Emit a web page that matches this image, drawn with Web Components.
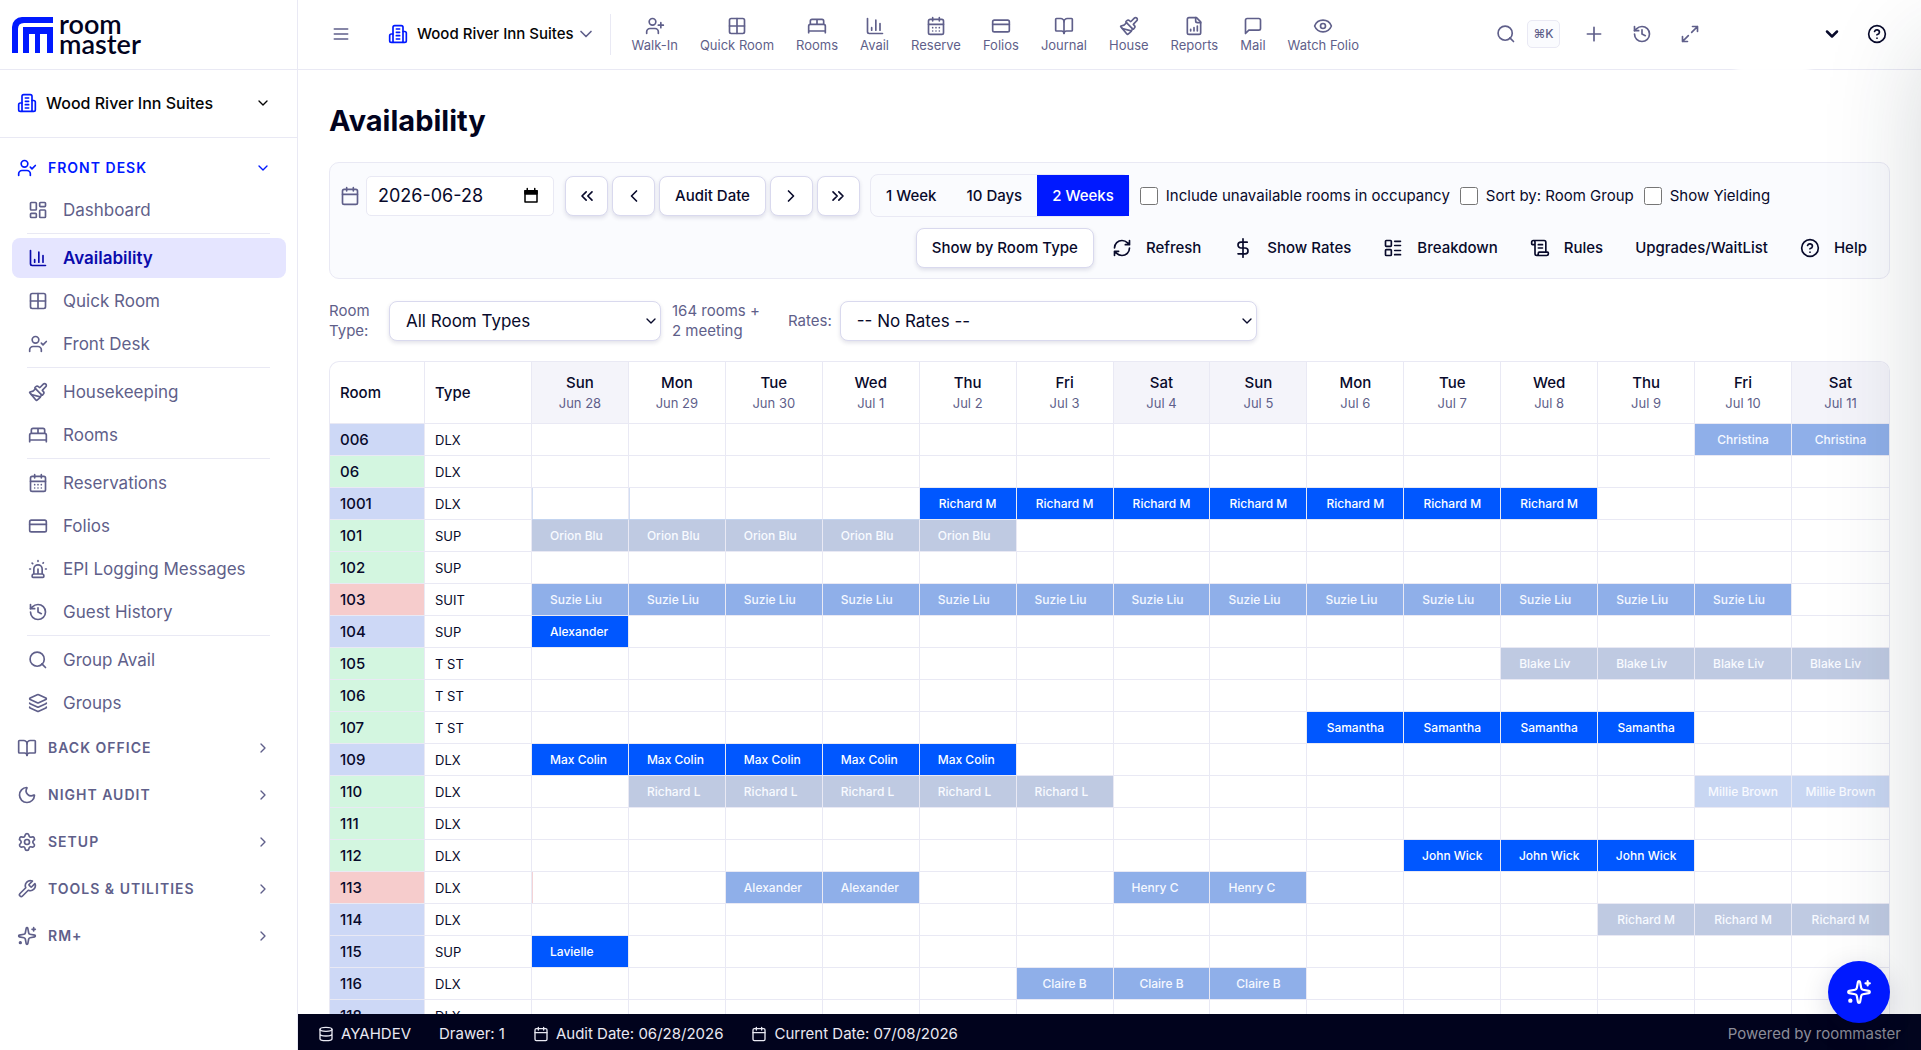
<!DOCTYPE html>
<html lang="en">
<head>
<meta charset="utf-8">
<meta name="viewport" content="width=device-width, initial-scale=1">
<title>Availability</title>
<style>
  :root {
    --ink: #080a2b;
    --muted: #5f5f8a;
    --brand: #0019ff;
    --line: #e9e9f4;
    --soft: #fafbfe;
  }
  html, body { height: 100%; }
  body { margin: 0; background: #fff; color: var(--ink); font: 15px/20px Inter, "Open Sans", "Liberation Sans", sans-serif; }
</style>
</head>
<body>
<rm-app></rm-app>

<script>
const ICONS = {
  menu: '<path d="M4 6h16M4 12h16M4 18h16"/>',
  building: '<path d="M6 22V4a2 2 0 0 1 2-2h8a2 2 0 0 1 2 2v18Z"/><path d="M6 12H4a2 2 0 0 0-2 2v6a2 2 0 0 0 2 2h2M18 9h2a2 2 0 0 1 2 2v9a2 2 0 0 1-2 2h-2M10 6h4M10 10h4M10 14h4M10 18h4"/>',
  userCheck: '<path d="m16 11 2 2 4-4M16 21v-2a4 4 0 0 0-4-4H6a4 4 0 0 0-4 4v2"/><circle cx="9" cy="7" r="4"/>',
  userPlus: '<path d="M16 21v-2a4 4 0 0 0-4-4H6a4 4 0 0 0-4 4v2M19 8v6M22 11h-6"/><circle cx="9" cy="7" r="4"/>',
  dashboard: '<rect width="7" height="9" x="3" y="3" rx="1"/><rect width="7" height="5" x="14" y="3" rx="1"/><rect width="7" height="9" x="14" y="12" rx="1"/><rect width="7" height="5" x="3" y="16" rx="1"/>',
  chart: '<path d="M3 3v16a2 2 0 0 0 2 2h16M18 17V9M13 17V5M8 17v-3"/>',
  grid: '<path d="M12 3v18M3 12h18"/><rect x="3" y="3" width="18" height="18" rx="2"/>',
  brush: '<path d="m14.622 17.897-10.68-2.913"/><path d="M18.376 2.622a1 1 0 1 1 3.002 3.002L17.36 9.643a.5.5 0 0 0 0 .707l.944.944a2.41 2.41 0 0 1 0 3.408l-.944.944a.5.5 0 0 1-.707 0L8.354 7.348a.5.5 0 0 1 0-.707l.944-.944a2.41 2.41 0 0 1 3.408 0l.944.944a.5.5 0 0 0 .707 0z"/><path d="M9 8c-1.804 2.71-3.97 3.46-6.583 3.948a.507.507 0 0 0-.302.819l7.32 8.883a1 1 0 0 0 1.185.204C12.735 20.405 16 16.792 16 15"/>',
  bed: '<path d="M2 20v-8a2 2 0 0 1 2-2h16a2 2 0 0 1 2 2v8M4 10V6a2 2 0 0 1 2-2h12a2 2 0 0 1 2 2v4M12 4v6M2 18h20"/>',
  calendarDays: '<path d="M8 2v4M16 2v4M3 10h18M8 14h.01M12 14h.01M16 14h.01M8 18h.01M12 18h.01M16 18h.01"/><rect width="18" height="18" x="3" y="4" rx="2"/>',
  calendar: '<path d="M8 2v4M16 2v4M3 10h18"/><rect width="18" height="18" x="3" y="4" rx="2"/>',
  card: '<rect width="20" height="14" x="2" y="5" rx="2"/><path d="M2 10h20"/>',
  siren: '<path d="M7 18v-6a5 5 0 1 1 10 0v6M5 21a1 1 0 0 0 1 1h12a1 1 0 0 0 1-1v-1a2 2 0 0 0-2-2H7a2 2 0 0 0-2 2zM21 12h1M18.5 4.5 18 5M2 12h1M12 2v1M4.929 4.929l.707.707M12 12v6"/>',
  history: '<path d="M3 12a9 9 0 1 0 9-9 9.75 9.75 0 0 0-6.74 2.74L3 8"/><path d="M3 3v5h5M12 7v5l4 2"/>',
  search: '<path d="m21 21-4.34-4.34"/><circle cx="11" cy="11" r="8.5"/>',
  layers: '<path d="M12.83 2.18a2 2 0 0 0-1.66 0L2.6 6.08a1 1 0 0 0 0 1.83l8.58 3.91a2 2 0 0 0 1.66 0l8.58-3.9a1 1 0 0 0 0-1.83z"/><path d="M2 12a1 1 0 0 0 .58.91l8.6 3.91a2 2 0 0 0 1.65 0l8.58-3.9A1 1 0 0 0 22 12"/><path d="M2 17a1 1 0 0 0 .58.91l8.6 3.91a2 2 0 0 0 1.65 0l8.58-3.9A1 1 0 0 0 22 17"/>',
  book: '<path d="M12 7v14"/><path d="M3 18a1 1 0 0 1-1-1V4a1 1 0 0 1 1-1h5a4 4 0 0 1 4 4 4 4 0 0 1 4-4h5a1 1 0 0 1 1 1v13a1 1 0 0 1-1 1h-6a3 3 0 0 0-3 3 3 3 0 0 0-3-3z"/>',
  moon: '<path d="M20.985 12.486a9 9 0 1 1-9.473-9.472c.405-.022.617.46.402.803a6 6 0 0 0 8.268 8.268c.344-.215.825-.004.803.401"/>',
  settings: '<path d="M9.671 4.136a2.34 2.34 0 0 1 4.659 0 2.34 2.34 0 0 0 3.319 1.915 2.34 2.34 0 0 1 2.33 4.033 2.34 2.34 0 0 0 0 3.831 2.34 2.34 0 0 1-2.33 4.033 2.34 2.34 0 0 0-3.319 1.915 2.34 2.34 0 0 1-4.659 0 2.34 2.34 0 0 0-3.32-1.915 2.34 2.34 0 0 1-2.33-4.033 2.34 2.34 0 0 0 0-3.831A2.34 2.34 0 0 1 6.35 6.051a2.34 2.34 0 0 0 3.319-1.915"/><circle cx="12" cy="12" r="3"/>',
  wrench: '<path d="M14.7 6.3a1 1 0 0 0 0 1.4l1.6 1.6a1 1 0 0 0 1.4 0l3.77-3.77a6 6 0 0 1-7.94 7.94l-6.91 6.91a2.12 2.12 0 0 1-3-3l6.91-6.91a6 6 0 0 1 7.94-7.94l-3.76 3.76z"/>',
  sparkles: '<path d="M11.017 2.814a1 1 0 0 1 1.966 0l1.051 5.558a2 2 0 0 0 1.594 1.594l5.558 1.051a1 1 0 0 1 0 1.966l-5.558 1.051a2 2 0 0 0-1.594 1.594l-1.051 5.558a1 1 0 0 1-1.966 0l-1.051-5.558a2 2 0 0 0-1.594-1.594l-5.558-1.051a1 1 0 0 1 0-1.966l5.558-1.051a2 2 0 0 0 1.594-1.594zM20 2v4M22 4h-4"/><circle cx="4" cy="20" r="1" fill="currentColor"/>',
  plus: '<path d="M4 12h16M12 4v16"/>',
  expand: '<path d="M15 3h6v6M21 3l-7 7M3 21l7-7M9 21H3v-6"/>',
  help: '<circle cx="12" cy="12" r="10"/><path d="M9.09 9a3 3 0 0 1 5.83 1c0 2-3 3-3 3M12 17h.01"/>',
  report: '<path d="M15 2H6a2 2 0 0 0-2 2v16a2 2 0 0 0 2 2h12a2 2 0 0 0 2-2V7Z"/><path d="M14 2v4a2 2 0 0 0 2 2h4M8 18v-2M12 18v-4M16 18v-6"/>',
  message: '<path d="M21 15a2 2 0 0 1-2 2H7l-4 4V5a2 2 0 0 1 2-2h14a2 2 0 0 1 2 2z"/>',
  eye: '<path d="M2.062 12.348a1 1 0 0 1 0-.696 10.75 10.75 0 0 1 19.876 0 1 1 0 0 1 0 .696 10.75 10.75 0 0 1-19.876 0"/><circle cx="12" cy="12" r="3"/>',
  refresh: '<path d="M3 12a9 9 0 0 1 9-9 9.75 9.75 0 0 1 6.74 2.74L21 8M21 3v5h-5M21 12a9 9 0 0 1-9 9 9.75 9.75 0 0 1-6.74-2.74L3 16M8 16H3v5"/>',
  dollar: '<path d="M12 1v22M17 5H9.5a3.5 3.5 0 0 0 0 7h5a3.5 3.5 0 0 1 0 7H6"/>',
  list: '<rect width="7" height="7" x="3" y="3" rx="1"/><rect width="7" height="7" x="3" y="14" rx="1"/><path d="M14 4h7M14 9h7M14 15h7M14 20h7"/>',
  scroll: '<path d="M15 12h-5M15 8h-5M19 17V5a2 2 0 0 0-2-2H4M8 21h12a2 2 0 0 0 2-2v-1a1 1 0 0 0-1-1H11a1 1 0 0 0-1 1v1a2 2 0 1 1-4 0V5a2 2 0 1 0-4 0v2a1 1 0 0 0 1 1h3"/>',
  database: '<ellipse cx="12" cy="5" rx="9" ry="3"/><path d="M3 5v14a9 3 0 0 0 18 0V5M3 12a9 3 0 0 0 18 0"/>',
  down: '<path d="m6 9 6 6 6-6"/>',
  right: '<path d="m9 18 6-6-6-6"/>',
  left: '<path d="m15 18-6-6 6-6"/>',
  first: '<path d="m11 17-5-5 5-5M18 17l-5-5 5-5"/>',
  last: '<path d="m6 17 5-5-5-5M13 17l5-5-5-5"/>',
  datePicker: '<path d="M4 5h16v15H4zM4 5h16v4H4z"/><path d="M4 5h16v4H4z" fill="currentColor"/><path d="M7 2v3M17 2v3"/>'
};

/* Base class: puts a style sheet and markup in an open shadow root. */
class RmElement extends HTMLElement {
  connectedCallback() {
    if (this.shadowRoot) return;
    const root = this.attachShadow({ mode: 'open' });
    const tpl = document.createElement('template');
    tpl.innerHTML = `<style>*{box-sizing:border-box}button,input,select{font:inherit;color:inherit}button{background:none;border:0;padding:0;cursor:pointer}a{color:inherit;text-decoration:none}${this.css()}</style>${this.html()}`;
    root.append(tpl.content.cloneNode(true));
  }
  css() { return ':host{display:block}'; }
  html() { return '<slot></slot>'; }
  attr(name, fallback = '') { return this.getAttribute(name) ?? fallback; }
}

customElements.define('rm-icon', class extends RmElement {
  css() { return `:host{display:inline-flex;flex:none} svg{display:block}`; }
  html() {
    const s = this.attr('size', '20');
    return `<svg width="${s}" height="${s}" viewBox="0 0 24 24" fill="none" stroke="currentColor" stroke-width="${this.attr('weight', '2')}" stroke-linecap="round" stroke-linejoin="round" aria-hidden="true">${ICONS[this.attr('name')]}</svg>`;
  }
});

customElements.define('rm-logo', class extends RmElement {
  css() { return `
    :host{display:block;height:70px;border-bottom:1px solid var(--line);padding:14px 12px}
    a{display:flex;gap:6px;align-items:center}
    svg{display:block}
    .word{font:600 27px/20px Lato,"Open Sans",sans-serif;display:grid;color:#02031e}`; }
  html() { return `<a href="#home" aria-label="roommaster">
      <svg width="41" height="37" viewBox="0 0 41 37"><g fill="#0019ff"><path d="M0 37V11A10 10 0 0 1 10 1H41V7H12Q6 7 6 13V37Z"/><path d="M11 37V11H41V37H35V18H28V37H23V18H17V37Z"/></g></svg>
      <span class="word"><span>room</span><span>master</span></span></a>`; }
});

customElements.define('rm-nav-item', class extends RmElement {
  css() { return `
    :host{display:block;padding:0 11px 0 12px}
    a{display:flex;align-items:center;gap:15px;height:40px;padding:0 16px;border-radius:8px;font-size:17px;color:var(--muted)}
    a[aria-current]{background:#e5e5ff;color:#0a0aac;font-weight:600}`; }
  html() { return `<a href="#" ${this.hasAttribute('active') ? 'aria-current="page"' : ''}><rm-icon name="${this.attr('icon')}"></rm-icon><slot></slot></a>`; }
});

customElements.define('rm-nav-group', class extends RmElement {
  css() { return `
    :host{display:block;color:var(--muted)}
    :host([open]){color:var(--brand)}
    button{display:flex;align-items:center;gap:11px;width:100%;height:44px;padding:0 26px 0 17px;font-size:14px;font-weight:600;letter-spacing:1px;text-align:left}
    .t{flex:1}
    .items{display:flex;flex-direction:column;gap:3px}`; }
  html() { const o = this.hasAttribute('open'); return `<button type="button" aria-expanded="${o}"><rm-icon name="${this.attr('icon')}"></rm-icon><span class="t">${this.attr('label').replace('&', '&amp;')}</span><rm-icon name="${o ? 'down' : 'right'}" size="16"></rm-icon></button><div class="items"><slot></slot></div>`; }
});

customElements.define('rm-sidebar', class extends RmElement {
  css() { return `
    :host{display:flex;flex-direction:column;border-right:1px solid var(--line);background:#fff;overflow:hidden}
    .prop{display:flex;align-items:center;gap:9px;height:68px;padding:0 26px 2px 17px;border-bottom:1px solid var(--line);font-size:16px;font-weight:500;color:#050505;text-align:left}
    .prop span{flex:1}
    .blue{color:var(--brand)}
    nav{display:flex;flex-direction:column;gap:3px;padding-top:8px}
    hr{border:0;height:1px;background:var(--line);margin:0 27px 1px;align-self:stretch}`; }
  html() {
    const item = (i, t, a = '') => `<rm-nav-item icon="${i}" ${a}>${t}</rm-nav-item>`;
    return `<rm-logo></rm-logo>
    <button type="button" class="prop"><rm-icon class="blue" name="building"></rm-icon><span>Wood River Inn Suites</span><rm-icon name="down" size="16"></rm-icon></button>
    <nav aria-label="Main">
      <rm-nav-group open icon="userCheck" label="FRONT DESK">
        ${item('dashboard', 'Dashboard')}<hr>
        ${item('chart', 'Availability', 'active')}${item('grid', 'Quick Room')}${item('userCheck', 'Front Desk')}<hr>
        ${item('brush', 'Housekeeping')}${item('bed', 'Rooms')}<hr>
        ${item('calendarDays', 'Reservations')}${item('card', 'Folios')}${item('siren', 'EPI Logging Messages')}${item('history', 'Guest History')}<hr>
        ${item('search', 'Group Avail')}${item('layers', 'Groups')}
      </rm-nav-group>
      <rm-nav-group icon="book" label="BACK OFFICE"></rm-nav-group>
      <rm-nav-group icon="moon" label="NIGHT AUDIT"></rm-nav-group>
      <rm-nav-group icon="settings" label="SETUP"></rm-nav-group>
      <rm-nav-group icon="wrench" label="TOOLS & UTILITIES"></rm-nav-group>
      <rm-nav-group icon="sparkles" label="RM+"></rm-nav-group>
    </nav>`;
  }
});

customElements.define('rm-quick-link', class extends RmElement {
  css() { return `
    :host{display:block}
    a{display:flex;flex-direction:column;align-items:center;gap:1px;font-size:13px;line-height:16px;white-space:nowrap;color:var(--muted)}`; }
  html() { return `<a href="#"><rm-icon name="${this.attr('icon')}"></rm-icon><slot></slot></a>`; }
});

customElements.define('rm-topbar', class extends RmElement {
  css() { return `
    :host{display:flex;align-items:center;height:70px;padding:0 34px 1px 33px;border-bottom:1px solid var(--line);background:#fff;color:var(--muted)}
    .prop{display:flex;align-items:center;gap:9px;margin-left:37px;font-weight:500;color:#050505;white-space:nowrap}
    .prop .c{color:var(--muted);margin-left:-7px}
    .blue{color:var(--brand)}
    .rule{width:1px;height:41px;background:var(--line);margin:0 21px 0 14px}
    nav{display:flex;gap:22px}
    .tools{display:flex;align-items:center;margin-left:auto}
    button{display:flex}
    .find{align-items:center;gap:11px}
    kbd{display:grid;place-items:center;width:33px;height:28px;border:1px solid var(--line);border-radius:5px;background:var(--soft);font:500 12px/16px Inter,"DejaVu Sans",sans-serif}
    .g{margin-left:24px}.h{margin-left:28px}
    .user{align-items:center;position:relative;margin-left:28px;width:114px;justify-content:flex-end;color:var(--ink)}
    .veil{position:absolute;left:8px;top:-18px;width:74px;height:68px;background:#fff;filter:blur(3px)}
    .last{margin-left:25px;color:var(--ink)}`; }
  html() {
    const q = (i, t) => `<rm-quick-link icon="${i}">${t}</rm-quick-link>`;
    return `<button type="button" aria-label="Toggle menu"><rm-icon name="menu"></rm-icon></button>
    <button type="button" class="prop"><rm-icon class="blue" name="building"></rm-icon><span>Wood River Inn Suites</span><rm-icon class="c" name="down"></rm-icon></button>
    <span class="rule"></span>
    <nav aria-label="Shortcuts">${q('userPlus', 'Walk-In')}${q('grid', 'Quick Room')}${q('bed', 'Rooms')}${q('chart', 'Avail')}${q('calendarDays', 'Reserve')}${q('card', 'Folios')}${q('book', 'Journal')}${q('brush', 'House')}${q('report', 'Reports')}${q('message', 'Mail')}${q('eye', 'Watch Folio')}</nav>
    <div class="tools">
      <button type="button" class="find" aria-label="Search"><rm-icon name="search"></rm-icon><kbd>⌘K</kbd></button>
      <button type="button" class="g" aria-label="Add"><rm-icon name="plus"></rm-icon></button>
      <button type="button" class="h" aria-label="History"><rm-icon name="history"></rm-icon></button>
      <button type="button" class="h" aria-label="Full screen"><rm-icon name="expand"></rm-icon></button>
      <button type="button" class="user" aria-label="Account"><span class="veil"></span><rm-icon name="down" weight="3"></rm-icon></button>
      <button type="button" class="last" aria-label="Help"><rm-icon name="help"></rm-icon></button>
    </div>`;
  }
});

customElements.define('rm-button', class extends RmElement {
  css() { return `
    :host{display:block}
    button{display:flex;align-items:center;justify-content:center;gap:14px;height:40px;padding:0 14px;border-radius:8px;font-size:15px;font-weight:500;white-space:nowrap}
    :host([raised]) button{padding:0 15px;background:#fff;border:1px solid #d9d9ee;box-shadow:0 2px 4px rgba(20,20,70,.12)}
    :host([raised][square]) button{width:43px;padding:0}`; }
  html() {
    const i = this.attr('icon'), l = this.attr('label');
    return `<button type="button" ${l ? `aria-label="${l}"` : ''}>${i ? `<rm-icon name="${i}"></rm-icon>` : ''}<slot></slot></button>`;
  }
});

customElements.define('rm-toolbar', class extends RmElement {
  css() { return `
    :host{display:flex;flex-direction:column;gap:11px;padding:11px 8px 10px 10px;background:var(--soft);border:1px solid var(--line);border-radius:10px}
    .row{display:flex;align-items:center}
    .end{justify-content:flex-end;gap:4px}
    .date{display:flex;align-items:center;gap:6px;color:var(--muted)}
    .date label{display:flex}
    .field{display:flex;align-items:center;width:188px;height:40px;padding:0 13px 0 11px;background:#fff;border:1px solid var(--line);border-radius:5px;color:var(--ink)}
    .field input{flex:1;min-width:0;border:0;background:none;padding:0;font-size:18px;outline:0}
    .field button{color:#000;display:flex}
    .steps{display:flex;gap:4px;margin-left:11px}
    .seg{display:flex;margin-left:10px;height:43px;border:1px solid var(--line);border-radius:8px}
    .seg button{padding:0 15px;font-weight:500}
    .seg button[aria-pressed=true]{background:var(--brand);color:#fff}
    .check{display:flex;align-items:center;gap:8px;margin-left:10px;white-space:nowrap}
    .check input{width:18px;height:18px;margin:0}`; }
  html() { return `
    <div class="row">
      <div class="date"><label for="d" aria-label="Date"><rm-icon name="calendar"></rm-icon></label>
        <span class="field"><input id="d" type="text" value="2026-06-28" inputmode="numeric"><button type="button" aria-label="Open calendar"><rm-icon name="datePicker" size="18"></rm-icon></button></span></div>
      <div class="steps">
        <rm-button raised square icon="first" label="Back two weeks"></rm-button><rm-button raised square icon="left" label="Back one day"></rm-button><rm-button raised>Audit Date</rm-button><rm-button raised square icon="right" label="Forward one day"></rm-button><rm-button raised square icon="last" label="Forward two weeks"></rm-button>
      </div>
      <div class="seg" role="group" aria-label="Range"><button type="button" aria-pressed="false">1 Week</button><button type="button" aria-pressed="false">10 Days</button><button type="button" aria-pressed="true">2 Weeks</button></div>
      <label class="check"><input type="checkbox">Include unavailable rooms in occupancy</label>
      <label class="check"><input type="checkbox">Sort by: Room Group</label>
      <label class="check"><input type="checkbox">Show Yielding</label>
    </div>
    <div class="row end">
      <rm-button raised>Show by Room Type</rm-button>
      <rm-button icon="refresh">Refresh</rm-button>
      <rm-button icon="dollar">Show Rates</rm-button>
      <rm-button icon="list">Breakdown</rm-button>
      <rm-button icon="scroll">Rules</rm-button>
      <rm-button>Upgrades/WaitList</rm-button>
      <rm-button icon="help">Help</rm-button>
    </div>`; }
});

customElements.define('rm-filters', class extends RmElement {
  css() { return `
    :host{display:flex;align-items:center;height:40px;color:var(--muted)}
    .room{width:60px}
    .pick{display:grid;align-items:center;width:272px;color:var(--ink)}
    .pick.wide{width:417px;margin-left:8px}
    .pick > *{grid-area:1/1}
    .pick rm-icon{justify-self:end;margin-right:2px;pointer-events:none}
    select{appearance:none;width:100%;height:40px;padding:0 24px 0 16px;font-size:17px;background:#fff;border:1px solid #d9d9ee;border-radius:8px;box-shadow:0 2px 4px rgba(20,20,70,.12);outline:0}
    .count{width:105px;margin:0 11px}`; }
  html() { return `
    <label class="room" for="type">Room<br>Type:</label>
    <span class="pick"><select id="type"><option>All Room Types</option></select><rm-icon name="down" size="16"></rm-icon></span>
    <span class="count">164 rooms +<br>2 meeting</span>
    <label for="rate">Rates:</label>
    <span class="pick wide"><select id="rate"><option>-- No Rates --</option></select><rm-icon name="down" size="16"></rm-icon></span>`; }
});

const DAYS = ['Sun Jun 28', 'Mon Jun 29', 'Tue Jun 30', 'Wed Jul 1', 'Thu Jul 2', 'Fri Jul 3', 'Sat Jul 4', 'Sun Jul 5', 'Mon Jul 6', 'Tue Jul 7', 'Wed Jul 8', 'Thu Jul 9', 'Fri Jul 10', 'Sat Jul 11'];
/* room, type, status, stays as [first day, nights, guest, tone, text at start] */
const ROOMS = [
  ['006', 'DLX', 'b', [[12, 2, 'Christina', 'sky']]],
  ['06', 'DLX', 'g', []],
  ['1001', 'DLX', 'b', [[4, 7, 'Richard M', 'vivid']], 'outline'],
  ['101', 'SUP', 'g', [[0, 5, 'Orion Blu', 'slate', 1]]],
  ['102', 'SUP', 'g', []],
  ['103', 'SUIT', 'r', [[0, 13, 'Suzie Liu', 'sky', 1]]],
  ['104', 'SUP', 'b', [[0, 1, 'Alexander', 'vivid', 1]]],
  ['105', 'T ST', 'g', [[10, 4, 'Blake Liv', 'slate', 1]]],
  ['106', 'T ST', 'g', []],
  ['107', 'T ST', 'g', [[8, 4, 'Samantha', 'vivid']]],
  ['109', 'DLX', 'b', [[0, 5, 'Max Colin', 'vivid', 1]]],
  ['110', 'DLX', 'g', [[1, 5, 'Richard L', 'slate', 1], [12, 2, 'Millie Brown', 'pale']]],
  ['111', 'DLX', 'g', []],
  ['112', 'DLX', 'g', [[9, 3, 'John Wick', 'vivid']]],
  ['113', 'DLX', 'r', [[2, 2, 'Alexander', 'sky', 1], [6, 2, 'Henry C', 'sky', 1]], 'blush'],
  ['114', 'DLX', 'b', [[11, 3, 'Richard M', 'slate']]],
  ['115', 'SUP', 'b', [[0, 1, 'Lavielle', 'vivid', 1]]],
  ['116', 'DLX', 'b', [[5, 3, 'Claire B', 'sky']]],
  ['118', 'DLX', 'b', []]
];

customElements.define('rm-availability-grid', class extends RmElement {
  css() { return `
    :host{display:block;overflow:hidden;border:1px solid var(--line);border-bottom:0;border-radius:10px 10px 0 0}
    table{width:100%;table-layout:fixed;border-collapse:separate;border-spacing:0}
    .r{width:95px}.t{width:107px}
    th,td{padding:0;border-right:1px solid var(--line);border-bottom:1px solid var(--line);text-align:left;font-weight:500}
    th:last-child,td:last-child{border-right:0}
    thead th{height:62px;text-align:center}
    thead th.l{text-align:left;padding-left:10px}
    thead small{display:block;font-size:13px;font-weight:400;color:var(--muted)}
    .we{background:#f4f4fa}
    tbody tr{height:32px}
    tbody th{padding-left:10px;font-size:15px}
    .type{padding-left:10px;font-size:13px;font-weight:400}
    .b{background:#cdd8f6}.g{background:#d3f6e0}.r2{background:#f6cccc}
    .stay{display:block;height:31px;line-height:31px;font-size:12px;font-weight:500;color:#fff;text-align:center;white-space:nowrap;overflow:hidden}
    .stay.start{text-align:left;padding-left:18px}
    .vivid{background:#0057ff}.sky{background:#8fafe9;color:#f5f8ff}.slate{background:#bfcae2;color:#f8faff}.pale{background:#c8d6f2;color:#f8faff}
    .outline td.early{border-bottom-color:#c3d4f0}
    .outline td.edge{box-shadow:inset 1px 0 #d3def3}
    .blush td.edge.first{box-shadow:inset 1px 0 #f3d3d6}`; }
  html() {
    const head = DAYS.map(d => { const [w, ...r] = d.split(' '); return `<th scope="col" class="${w[0] === 'S' ? 'we' : ''}">${w}<small>${r.join(' ')}</small></th>`; }).join('');
    const body = ROOMS.map(([no, type, st, stays, mark = '']) => {
      let cells = '';
      for (let i = 0; i < 14; i++) {
        const s = stays.find(([a, n]) => i >= a && i < a + n);
        cells += `<td class="${i < 4 ? 'early' : ''} ${i < 2 ? 'edge' : ''} ${i ? '' : 'first'}">${s ? `<span class="stay ${s[3]} ${s[4] ? 'start' : ''}">${s[2]}</span>` : ''}</td>`;
      }
      return `<tr class="${mark}"><th scope="row" class="${st === 'r' ? 'r2' : st}">${no}</th><td class="type">${type}</td>${cells}</tr>`;
    }).join('');
    return `<table><colgroup><col class="r"><col class="t"><col span="14"></colgroup><thead><tr><th class="l" scope="col">Room</th><th class="l" scope="col">Type</th>${head}</tr></thead><tbody>${body}</tbody></table>`;
  }
});

customElements.define('rm-statusbar', class extends RmElement {
  css() { return `
    :host{display:flex;align-items:center;height:36px;padding:4px 20px 0;background:#01031d;color:#e9e9f2}
    span{display:flex;align-items:center;gap:7px;margin-right:28px}
    .by{margin:0 0 0 auto;color:#8c8d99}`; }
  html() { return `<span><rm-icon name="database" size="16"></rm-icon>AYAHDEV</span><span>Drawer: 1</span><span><rm-icon name="calendar" size="16"></rm-icon>Audit Date: 06/28/2026</span><span><rm-icon name="calendar" size="16"></rm-icon>Current Date: 07/08/2026</span><span class="by">Powered by roommaster</span>`; }
});

customElements.define('rm-assistant', class extends RmElement {
  css() { return `
    :host{position:fixed;right:31px;bottom:27px}
    button{display:grid;place-items:center;width:62px;height:62px;border-radius:50%;background:var(--brand);color:#fff;box-shadow:0 8px 28px rgba(20,20,60,.16)}`; }
  html() { return `<button type="button" aria-label="Assistant"><rm-icon name="sparkles" size="26"></rm-icon></button>`; }
});

/* Closed side drawer: only its shadow reaches into the window. */
customElements.define('rm-drawer', class extends RmElement {
  css() { return `
    :host{position:fixed;inset:0;overflow:hidden;pointer-events:none}
    div{position:absolute;left:100%;top:0;width:400px;height:150%;box-shadow:0 45px 90px rgba(30,42,55,.18)}`; }
  html() { return `<div></div>`; }
});

customElements.define('rm-app', class extends RmElement {
  css() { return `
    :host{display:grid;grid-template-columns:298px minmax(0,1fr);height:100vh;overflow:hidden}
    .col{display:flex;flex-direction:column;min-width:0;min-height:0}
    main{flex:1;min-height:0;display:flex;flex-direction:column;padding:33px 31px 0;overflow:hidden}
    h1{margin:0 0 23px;font-size:29px;line-height:36px;font-weight:700;color:#02031e}
    rm-toolbar{flex:none}
    rm-filters{flex:none;margin:22px 0 20px}
    rm-availability-grid{flex:1;min-height:0}`; }
  html() { return `<rm-sidebar></rm-sidebar><div class="col"><rm-topbar></rm-topbar><main><h1>Availability</h1><rm-toolbar></rm-toolbar><rm-filters></rm-filters><rm-availability-grid></rm-availability-grid></main><rm-statusbar></rm-statusbar></div><rm-drawer></rm-drawer><rm-assistant></rm-assistant>`; }
});
</script>
</body>
</html>
